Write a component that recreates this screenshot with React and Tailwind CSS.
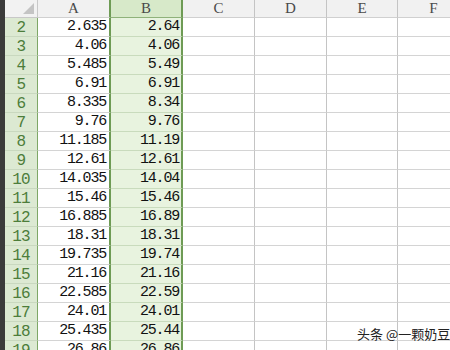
import React from 'react';

const a = ['2.635', '4.06', '5.485', '6.91', '8.335', '9.76', '11.185', '12.61', '14.035', '15.46', '16.885', '18.31', '19.735', '21.16', '22.585', '24.01', '25.435', '26.86'];
const b = ['2.64', '4.06', '5.49', '6.91', '8.34', '9.76', '11.19', '12.61', '14.04', '15.46', '16.89', '18.31', '19.74', '21.16', '22.59', '24.01', '25.44', '26.86'];

const mono = { fontFamily: '"Liberation Mono", monospace' };

export default function App() {
  return (
    <div className="relative flex w-[450px] h-[350px] overflow-hidden bg-white">
      <div className="w-[5px] shrink-0 bg-[#3b3b3b]" />
      <div className="grid grid-cols-[33px_73px_72px_72px_72px_71px_72px] auto-rows-[19px] grid-rows-[18px] content-start">
        {/* header row */}
        <div className="relative border-r border-b border-[#c8c8c8] bg-[#f2f2f2]">
          <svg className="absolute right-[3px] bottom-[3px]" width="11" height="11" viewBox="0 0 11 11">
            <polygon points="11,0 11,11 0,11" fill="#c4c4c4" />
          </svg>
        </div>
        {['A', 'B', 'C', 'D', 'E', 'F'].map((c) => (
          <div
            key={c}
            className={
              'flex items-center justify-center text-[15px] text-[#4a4a4a] border-b ' +
              (c === 'B'
                ? 'bg-[#d7e9c9] border-[#8fb27a] border-r-2 border-r-[#6e9b55]'
                : c === 'A'
                ? 'bg-[#f1f1f1] border-[#d0d0d0] border-r-2 border-r-[#6e9b55]'
                : 'bg-[#f1f1f1] border-[#d0d0d0] border-r border-r-[#c4c4c4]')
            }
            style={{ fontFamily: '"Liberation Serif", serif' }}
          >
            {c}
          </div>
        ))}
        {a.map((v, i) => (
          <React.Fragment key={i}>
            <div
              className="flex items-center justify-center pt-[1px] text-[16px] tracking-[-0.8px] text-[#4c7d3a] bg-[#dce9d2] border-r border-r-[#7ea766] border-b border-b-[#c9d8bf]"
              style={mono}
            >
              {i + 2}
            </div>
            <div
              className="flex items-center justify-end pr-[3px] pt-[1px] text-[15px] tracking-[-1.2px] text-[#111] bg-white border-b border-[#d4d4d4] border-r-2 border-r-[#6e9b55]"
              style={mono}
            >
              {v}
            </div>
            <div
              className="flex items-center justify-end pr-[2px] pt-[1px] text-[15px] tracking-[-1.2px] text-[#111] bg-[#e8f3df] border-b border-[#c9dbbd] border-r-2 border-r-[#6e9b55]"
              style={mono}
            >
              {b[i]}
            </div>
            {[0, 1, 2, 3].map((k) => (
              <div key={k} className="bg-white border-b border-[#d4d4d4] border-r border-r-[#c4c4c4]" />
            ))}
          </React.Fragment>
        ))}
      </div>
      <div
        className="absolute left-[357px] top-[324px] whitespace-nowrap text-[13px] text-[#222] [text-shadow:0_0_2px_#fff]"
        style={{ fontFamily: '"Noto Sans CJK SC", sans-serif' }}
      >
        头条 @一颗奶豆
      </div>
    </div>
  );
}
